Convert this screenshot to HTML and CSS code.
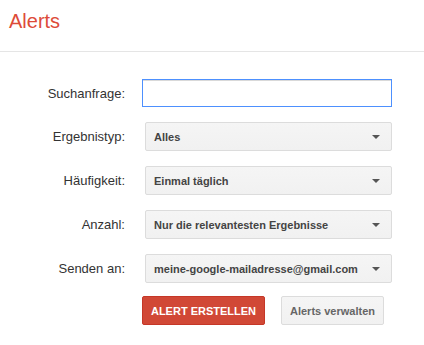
FILE: index.html
```html
<!DOCTYPE html>
<html lang="de">

<head>
    <meta charset="UTF-8">
    <link rel="stylesheet" href="styles.css">
</head>

<body>
    <div class="kopf">
        <h1 class="titel">Alerts</h1>
    </div>

    <form class="formular" action="#">
        <div class="zeile">
            <label class="beschriftung" for="suche">Suchanfrage:</label>
            <input class="eingabe" type="text" id="suche">
        </div>
        <div class="zeile">
            <span class="beschriftung">Ergebnistyp:</span>
            <div class="auswahl"><span>Alles</span><i class="pfeil"></i></div>
        </div>
        <div class="zeile">
            <span class="beschriftung">Häufigkeit:</span>
            <div class="auswahl"><span>Einmal täglich</span><i class="pfeil"></i></div>
        </div>
        <div class="zeile">
            <span class="beschriftung">Anzahl:</span>
            <div class="auswahl"><span>Nur die relevantesten Ergebnisse</span><i class="pfeil"></i></div>
        </div>
        <div class="zeile">
            <span class="beschriftung">Senden an:</span>
            <div class="auswahl"><span>meine-google-mailadresse@gmail.com</span><i class="pfeil"></i></div>
        </div>
        <div class="knoepfe">
            <button type="button" class="knopf rot">ALERT ERSTELLEN</button>
            <button type="button" class="knopf grau">Alerts verwalten</button>
        </div>
    </form>
</body>

</html>
```

FILE: styles.css
```css
/* allgemein */
body {
    margin: 0;
    background: #fff;
    font-family: Arial, "Liberation Sans", sans-serif;
    color: #333;
}

/* kopfbereich mit titel und trennlinie */
.kopf {
    height: 52px;
    border-bottom: 1px solid #e5e5e5;
    padding-left: 9px;
    box-sizing: border-box;
}

.titel {
    margin: 0;
    padding-top: 9px;
    font-size: 20px;
    font-weight: normal;
    color: #dd4b39;
    line-height: 24px;
}

/* formular */
.formular {
    display: flex;
    flex-direction: column;
    gap: 15px;
    padding-top: 27px;
    width: 392px;
}

.zeile {
    display: flex;
    align-items: center;
}

.beschriftung {
    width: 125px;
    text-align: right;
    font-size: 13px;
    color: #333;
    flex-shrink: 0;
}

.eingabe {
    margin-left: 17px;
    flex: 1;
    height: 28px;
    box-sizing: border-box;
    border: 1px solid #4d90fe;
    box-shadow: inset 0 1px 0 #d9d9d9;
    outline: none;
    padding: 0 8px;
    font-size: 13px;
}

/* auswahlfelder */
.auswahl {
    margin-left: 20px;
    flex: 1;
    height: 29px;
    box-sizing: border-box;
    display: flex;
    align-items: center;
    justify-content: space-between;
    padding: 0 11px 0 8px;
    background: linear-gradient(#f5f5f5, #f1f1f1);
    border: 1px solid #dcdcdc;
    border-radius: 2px;
    font-size: 11px;
    font-weight: bold;
    color: #444;
}

.pfeil {
    width: 0;
    height: 0;
    border-left: 4px solid transparent;
    border-right: 4px solid transparent;
    border-top: 4px solid #555;
}

/* knöpfe */
.knoepfe {
    display: flex;
    gap: 16px;
    padding-left: 142px;
    margin-top: -2px;
}

.knopf {
    height: 29px;
    box-sizing: border-box;
    border-radius: 2px;
    font-family: Arial, "Liberation Sans", sans-serif;
    font-size: 11px;
    font-weight: bold;
    padding: 0;
    white-space: nowrap;
    text-align: center;
}

.rot {
    width: 123px;
    background: #d14836;
    border: 1px solid #c53727;
    color: #fff;
}

.grau {
    width: 103px;
    background: linear-gradient(#f5f5f5, #f1f1f1);
    border: 1px solid #dcdcdc;
    color: #666;
}
```
